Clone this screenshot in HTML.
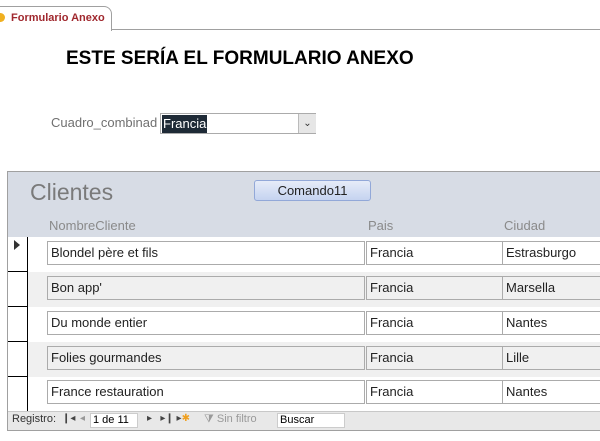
<!DOCTYPE html>
<html><head><style>
body{margin:0;width:600px;height:441px;background:#fff;font-family:"Liberation Sans",sans-serif;position:relative;overflow:hidden}
.a{position:absolute}
.f{position:absolute;border:1px solid #ababab;box-sizing:border-box;height:24px;font-size:13px;line-height:22px;padding-left:3px;color:#222;background:inherit}
.row{position:absolute;left:8px;width:592px;height:35px}
.sel{position:absolute;left:0;top:0;width:20px;height:35px;border-right:1px solid #000;border-bottom:1px solid #000;box-sizing:border-box;background:#fff}
</style></head><body>
<div class="a" style="left:0;top:29px;width:600px;height:1px;background:#a0a0a0"></div>
<div class="a" style="left:-2px;top:6px;width:112px;height:24px;border:1px solid #a0a0a0;border-bottom:none;border-radius:0 8px 0 0;background:#fff"></div>
<div class="a" style="left:-4px;top:13px;width:9px;height:9px;border-radius:50%;background:#f0b020"></div>
<div class="a" style="left:11px;top:12px;font-size:11px;font-weight:bold;color:#a0282e">Formulario Anexo</div>
<div class="a" style="left:66px;top:48px;font-size:19px;font-weight:bold;color:#000">ESTE SERÍA EL FORMULARIO ANEXO</div>
<div class="a" style="left:51px;top:115px;font-size:13px;color:#707070">Cuadro_combinad</div>
<div class="a" style="left:160px;top:113px;width:156px;height:21px;border:1px solid #ababab;box-sizing:border-box"></div>
<div class="a" style="left:162px;top:115px;height:18px;background:#1e2a36;color:#fff;font-size:13px;line-height:18px;padding:0 1px">Francia</div>
<div class="a" style="left:298px;top:114px;width:17px;height:19px;background:#e6e6e6;border-left:1px solid #bbb;font-size:10px;text-align:center;line-height:19px;color:#333">&#8964;</div>
<div class="a" style="left:7px;top:171px;width:593px;height:258px;border:1px solid #a0a0a0;border-right:none;background:#fff"></div>
<div class="a" style="left:8px;top:172px;width:592px;height:65px;background:#d7dce5"></div>
<div class="a" style="left:30px;top:179px;font-size:23px;color:#7a7a7a">Clientes</div>
<div class="a" style="left:254px;top:180px;width:117px;height:21px;border:1px solid #92a8d8;border-radius:3px;background:linear-gradient(#e6ecf8,#c5d3f0);box-sizing:border-box;text-align:center;font-size:13px;line-height:19px;color:#222">Comando11</div>
<div class="a" style="left:49px;top:218px;font-size:13px;color:#8a8a8a">NombreCliente</div>
<div class="a" style="left:368px;top:218px;font-size:13px;color:#8a8a8a">Pais</div>
<div class="a" style="left:504px;top:218px;font-size:13px;color:#8a8a8a">Ciudad</div>

<div class="row" style="top:237px;background:#fff"><div class="sel"><div class="a" style="left:6px;top:3px;width:0;height:0;border-left:6px solid #333;border-top:5px solid transparent;border-bottom:5px solid transparent"></div></div><div class="f" style="left:39px;top:4px;width:318px">Blondel père et fils</div><div class="f" style="left:358px;top:4px;width:137px">Francia</div><div class="f" style="left:494px;top:4px;width:110px">Estrasburgo</div></div>
<div class="row" style="top:272px;background:#f0f0f0"><div class="sel"></div><div class="f" style="left:39px;top:4px;width:318px">Bon app'</div><div class="f" style="left:358px;top:4px;width:137px">Francia</div><div class="f" style="left:494px;top:4px;width:110px">Marsella</div></div>
<div class="row" style="top:307px;background:#fff"><div class="sel"></div><div class="f" style="left:39px;top:4px;width:318px">Du monde entier</div><div class="f" style="left:358px;top:4px;width:137px">Francia</div><div class="f" style="left:494px;top:4px;width:110px">Nantes</div></div>
<div class="row" style="top:342px;background:#f0f0f0"><div class="sel"></div><div class="f" style="left:39px;top:4px;width:318px">Folies gourmandes</div><div class="f" style="left:358px;top:4px;width:137px">Francia</div><div class="f" style="left:494px;top:4px;width:110px">Lille</div></div>
<div class="row" style="top:377px;background:#fff;height:34px"><div class="sel" style="height:34px;border-bottom:none"></div><div class="f" style="left:39px;top:3px;width:318px">France restauration</div><div class="f" style="left:358px;top:3px;width:137px">Francia</div><div class="f" style="left:494px;top:3px;width:110px">Nantes</div></div>

<div class="a" style="left:8px;top:411px;width:592px;height:18px;background:#e8e8e8;border-top:1px solid #c8c8c8;font-size:11px;color:#333;line-height:18px"></div>
<div class="a" style="left:12px;top:413px;font-size:11px;color:#333">Registro:</div>
<div class="a" style="left:62px;top:413px;font-size:10px;color:#444">&#10073;&#9666;</div>
<div class="a" style="left:80px;top:413px;font-size:10px;color:#999">&#9666;</div>
<div class="a" style="left:90px;top:413px;width:48px;height:15px;background:#fff;border:1px solid #ccc;box-sizing:border-box;font-size:11px;line-height:13px;padding-left:2px">1 de 11</div>
<div class="a" style="left:147px;top:413px;font-size:10px;color:#444">&#9656;&nbsp;&nbsp;&nbsp;&#9656;&#10073;&nbsp;&#9656;<span style="color:#f0a020">&#10033;</span></div>
<div class="a" style="left:204px;top:413px;font-size:11px;color:#9a9a9a">&#10729; Sin filtro</div>
<div class="a" style="left:277px;top:413px;width:68px;height:15px;background:#fff;border:1px solid #ccc;box-sizing:border-box;font-size:11px;line-height:13px;padding-left:2px">Buscar</div>
</body></html>
